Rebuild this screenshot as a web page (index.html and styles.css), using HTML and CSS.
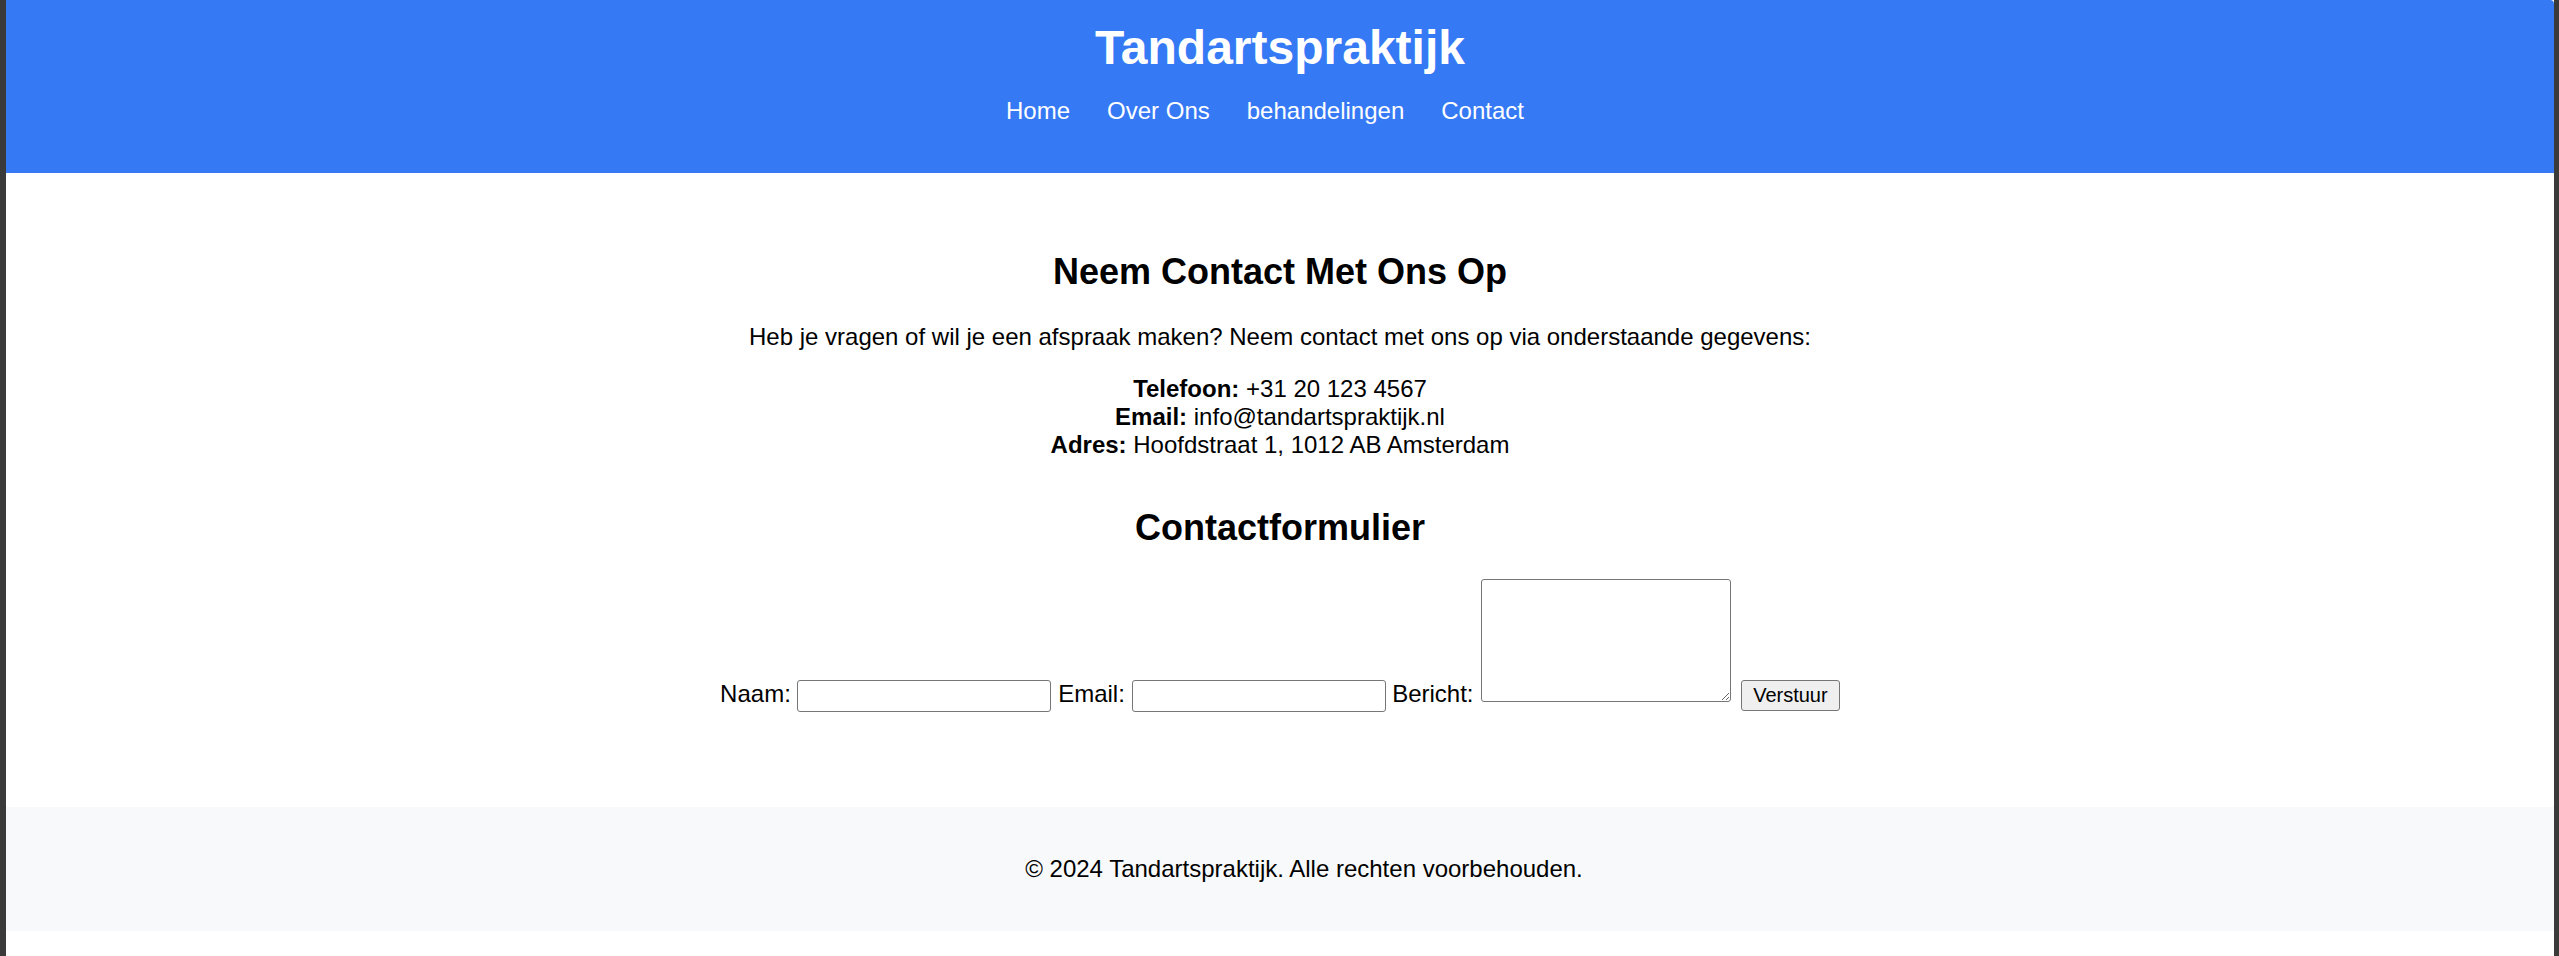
FILE: index.html
```html
<!DOCTYPE html>
<html lang="nl">
<head>
<meta charset="utf-8">
<title>Tandartspraktijk - Contact</title>
<link rel="stylesheet" href="styles.css">
</head>
<body>
<div class="page">
  <header class="site-header">
    <h1 class="site-title">Tandartspraktijk</h1>
    <nav>
      <ul class="nav-list">
        <li><a href="#">Home</a></li>
        <li><a href="#">Over Ons</a></li>
        <li><a href="#">behandelingen</a></li>
        <li><a href="#">Contact</a></li>
      </ul>
    </nav>
  </header>

  <main class="content">
    <section class="contact-info">
      <h2 class="section-title">Neem Contact Met Ons Op</h2>
      <p>Heb je vragen of wil je een afspraak maken? Neem contact met ons op via onderstaande gegevens:</p>
      <p><strong>Telefoon:</strong> +31 20 123 4567<br><strong>Email:</strong> info@tandartspraktijk.nl<br><strong>Adres:</strong> Hoofdstraat 1, 1012 AB Amsterdam</p>
    </section>

    <section class="contact-form">
      <h2 class="section-title form-title">Contactformulier</h2>
      <form class="form-row">
        <label for="naam">Naam:</label> <input class="field" type="text" id="naam"> <label for="email">Email:</label> <input class="field" type="email" id="email"> <label for="bericht">Bericht:</label> <textarea class="message" id="bericht"></textarea> <button class="submit" type="button">Verstuur</button>
      </form>
    </section>
  </main>

  <footer class="site-footer">
    <p>&copy; 2024 Tandartspraktijk. Alle rechten voorbehouden.</p>
  </footer>
</div>
</body>
</html>
```

FILE: styles.css
```css
html, body {
  margin: 0;
  padding: 0;
}

body {
  background: #3a3a3a;
  font-family: "Liberation Sans", Arial, sans-serif;
  font-size: 24px;
  color: #000;
}

.page {
  margin: 0 5px 0 6px;
  background: #fff;
  padding-bottom: 25px;
  min-height: 931px;
}

.site-header {
  background: #3579f5;
  color: #fff;
  text-align: center;
  padding: 20px 0 48px;
  border-top-right-radius: 4px;
}

.site-title {
  margin: 0;
  font-size: 48px;
  font-weight: bold;
  line-height: normal;
}

.nav-list {
  list-style: none;
  margin: 22px 0 0;
  padding: 0;
  display: flex;
  justify-content: center;
  gap: 7px;
}

.nav-list li {
  margin-right: 30px;
}

.nav-list a {
  color: #fff;
  text-decoration: none;
  font-size: 24px;
}

.content {
  text-align: center;
  padding: 48px 0 95px;
}

.section-title {
  font-size: 36px;
  font-weight: bold;
  margin: 30px 0;
  line-height: normal;
}

.content p {
  margin: 24px 0;
}

.form-title {
  margin-top: 48px;
}

.form-row {
  margin: 0;
}

.form-row label {
  font-size: 24px;
}

.field {
  box-sizing: border-box;
  width: 254px;
  height: 32px;
  border: 1px solid #767676;
  border-radius: 3px;
  padding: 0 3px;
  font-family: "Liberation Sans", Arial, sans-serif;
  font-size: 20px;
  margin: 0;
  background: #fff;
}

.message {
  box-sizing: border-box;
  width: 250px;
  height: 123px;
  border: 1px solid #767676;
  border-radius: 3px;
  padding: 3px;
  font-family: "Liberation Mono", monospace;
  font-size: 20px;
  margin: 0 1px;
  vertical-align: baseline;
}

.submit {
  box-sizing: border-box;
  width: 99px;
  height: 31px;
  border: 1px solid #767676;
  border-radius: 3px;
  background: #efefef;
  font-family: "Liberation Sans", Arial, sans-serif;
  font-size: 20px;
  color: #000;
  padding: 0 9px;
  margin: 0 0 0 2px;
}

.site-footer {
  background: #f8f9fa;
  text-align: center;
  padding: 24px 0 24px 48px;
}

.site-footer p {
  margin: 24px 0;
}
```
